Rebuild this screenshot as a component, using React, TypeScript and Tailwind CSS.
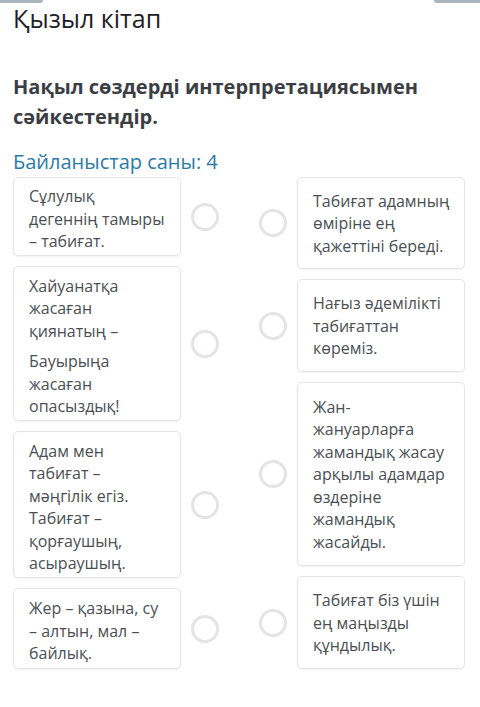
const LEFT = [
  { h: "h-[79px]", paras: [["Сұлулық", "дегеннің тамыры", "– табиғат."]] },
  {
    h: "h-[155px]",
    paras: [
      ["Хайуанатқа", "жасаған", "қиянатың –"],
      ["Бауырыңа", "жасаған", "опасыздық!"],
    ],
  },
  {
    h: "h-[147px]",
    paras: [
      [
        "Адам мен",
        "табиғат –",
        "мәңгілік егіз.",
        "Табиғат –",
        "қорғаушың,",
        "асыраушың.",
      ],
    ],
  },
  { h: "h-[81px]", paras: [["Жер – қазына, су", "– алтын, мал –", "байлық."]] },
];

const RIGHT = [
  { h: "h-[92px]", paras: [["Табиғат адамның", "өміріне ең", "қажеттіні береді."]] },
  { h: "h-[93px]", paras: [["Нағыз әдемілікті", "табиғаттан", "көреміз."]] },
  {
    h: "h-[184px]",
    paras: [
      [
        "Жан-",
        "жануарларға",
        "жамандық жасау",
        "арқылы адамдар",
        "өздеріне",
        "жамандық",
        "жасайды.",
      ],
    ],
  },
  { h: "h-[93px]", paras: [["Табиғат біз үшін", "ең маңызды", "құндылық."]] },
];

function Circle() {
  return (
    <div className="h-[28px] w-[28px] shrink-0 rounded-full border-[3px] border-[#e3e4e6] bg-white" />
  );
}

function Card({ h, paras, left }: { h: string; paras: string[][]; left: boolean }) {
  return (
    <div
      className={`${h} flex w-[168px] shrink-0 flex-col justify-center gap-[8px] rounded-[5px] border border-[#e4e5e7] bg-white pl-[15px] pr-[6px] shadow-[0_1px_2px_rgba(0,0,0,0.06)] ${
        left ? "pt-[5px]" : "pt-[1px]"
      }`}
    >
      {paras.map((lines, i) => (
        <p key={i} className="text-[16px] leading-[22.5px] text-[#4b4f54]">
          {lines.map((l) => (
            <span key={l} className="block whitespace-nowrap">
              {l}
            </span>
          ))}
        </p>
      ))}
    </div>
  );
}

export default function App() {
  return (
    <main className="min-h-[707px] bg-white font-['Open_Sans',sans-serif]">
      <div className="flex h-[3px] justify-between">
        <div className="w-[43px] rounded-br-[3px] bg-[#aab4bd]" />
        <div className="w-[46px] rounded-bl-[3px] bg-[#aab4bd]" />
      </div>
      <div className="px-[13px]">
        <h1 className="text-[25px] leading-[30px] text-[#1f2023]">Қызыл кітап</h1>
        <h2 className="mt-[39px] text-[20px] font-bold leading-[30px] text-[#3b3e44]">
          Нақыл сөздерді интерпретациясымен сәйкестендір.
        </h2>
        <p className="mt-[18px] text-[20px] leading-[24px] text-[#2a7ba8]">
          Байланыстар саны: 4
        </p>
        <div className="mt-[3px] flex gap-[40px]">
          <div className="flex flex-col gap-[10px]">
            {LEFT.map((c, i) => (
              <div key={i} className="flex items-center gap-[10px]">
                <Card h={c.h} paras={c.paras} left />
                <Circle />
              </div>
            ))}
          </div>
          <div className="flex flex-col gap-[10px]">
            {RIGHT.map((c, i) => (
              <div key={i} className="flex items-center gap-[10px]">
                <Circle />
                <Card h={c.h} paras={c.paras} left={false} />
              </div>
            ))}
          </div>
        </div>
      </div>
    </main>
  );
}
